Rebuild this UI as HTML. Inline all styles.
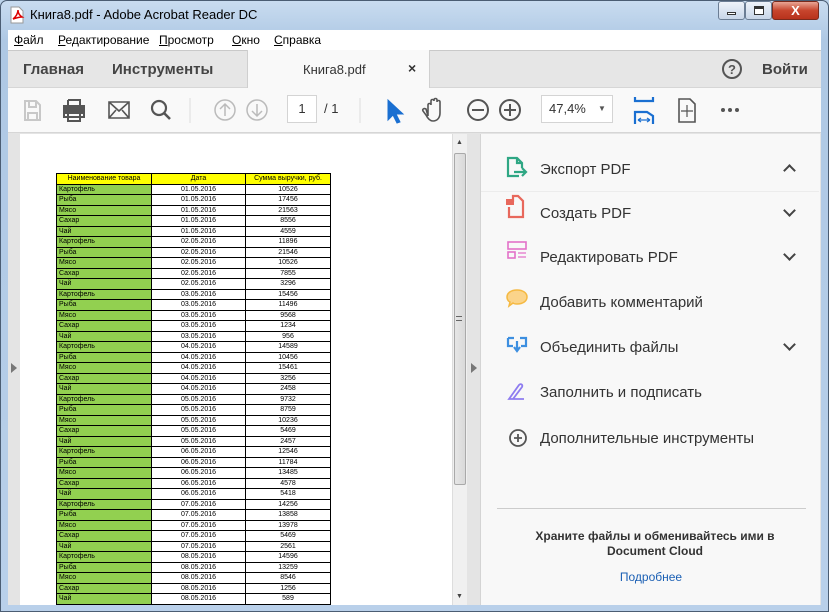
<!DOCTYPE html>
<html><head><meta charset="utf-8"><style>
*{margin:0;padding:0;box-sizing:border-box}
body{width:829px;height:612px;overflow:hidden;background:#bcd3ea;font-family:"Liberation Sans","DejaVu Sans",sans-serif;position:relative}
.abs{position:absolute}
#frame{left:0;top:0;width:829px;height:612px;background:linear-gradient(#c9dcf0,#aec8e4 40px,#b9d0ea);border:1px solid #4b5d73;border-radius:7px 7px 0 0}
#title{left:30px;top:7px;font-size:13px;color:#000}
.wb{top:1px;height:19px;border:1px solid #6b7d94;border-radius:3px;background:linear-gradient(#eef3fa,#c8d6e8)}
#menu{left:8px;top:30px;width:813px;height:20px;background:#fff;font-size:12px;}
#menu span{position:absolute;top:3px;text-decoration:none}
#menu u{text-decoration:underline}
#tabs{left:8px;top:50px;width:813px;height:38px;background:#e6e6e6;border-top:1px solid #c9c9c9;border-bottom:1px solid #d6d6d6}
#tb{left:8px;top:88px;width:813px;height:45px;background:#f9f9f9;border-bottom:1px solid #d6d6d6}
#doc{left:8px;top:133px;width:813px;height:472px;background:#e4e4e4}
#page{left:20px;top:134px;width:432px;height:471px;background:#fff}
#sb{left:452px;top:134px;width:15px;height:471px;background:#f0f0f0;border-left:1px solid #ddd}
#thumb{left:454px;top:153px;width:12px;height:332px;background:linear-gradient(90deg,#e6e6e6,#d9d9d9);border:1px solid #a9a9a9;border-radius:2px}
#rp{left:480px;top:134px;width:340px;height:471px;background:#f8f8f8;border-left:1px solid #d4d4d4}
table{position:absolute;left:56px;top:173px;border-collapse:collapse;font-size:7px;line-height:9.5px}
td{border:1px solid #000;height:10.5px;padding:0 2px;white-space:nowrap}
td:nth-child(1){width:95px;background:#92d050}
td:nth-child(2){width:94px;text-align:center}
td:nth-child(3){width:85px;text-align:center}
tr.h td{background:#ff0;text-align:center}
.item{position:absolute;left:540px;font-size:15px;color:#333}
.chev{position:absolute;left:785px;width:9px;height:9px;border-right:2px solid #444;border-bottom:2px solid #444;transform:rotate(45deg)}
</style></head><body>
<div id="frame" class="abs"></div>
<svg class="abs" style="left:9px;top:6px" width="16" height="18"><path d="M2 1h8l4 4v12H2z" fill="#fff" stroke="#999"/><path d="M4 13c3-2 5-6 5-9 0 3 1 5 4 7-3 0-6 1-9 2z" fill="none" stroke="#d00" stroke-width="1.5"/></svg>
<div id="title" class="abs">Книга8.pdf - Adobe Acrobat Reader DC</div>
<div class="abs wb" style="left:718px;width:27px"><div class="abs" style="left:8px;top:10px;width:9px;height:3px;background:#fff;border:1px solid #333"></div></div>
<div class="abs wb" style="left:745px;width:27px"><div class="abs" style="left:8px;top:4px;width:10px;height:9px;border:1px solid #333;border-top-width:3px;background:#fff"></div></div>
<div class="abs wb" style="left:772px;width:47px;background:linear-gradient(#e9a595,#c7452d 50%,#b8321c);border-color:#7a2a1c;color:#fff;font-weight:bold;text-align:center;font-size:13px;line-height:17px">X</div>
<div id="menu" class="abs">
<span style="left:6px"><u>Ф</u>айл</span><span style="left:50px"><u>Р</u>едактирование</span><span style="left:151px"><u>П</u>росмотр</span><span style="left:224px"><u>О</u>кно</span><span style="left:266px"><u>С</u>правка</span>
</div>
<div id="tabs" class="abs">
<div class="abs" style="left:15px;top:10px;font-size:15px;font-weight:bold;color:#444">Главная</div>
<div class="abs" style="left:104px;top:10px;font-size:15px;font-weight:bold;color:#444">Инструменты</div>
<div class="abs" style="left:239px;top:-1px;width:183px;height:38px;background:#f9f9f9;border-left:1px solid #cfcfcf;border-right:1px solid #cfcfcf"></div>
<div class="abs" style="left:295px;top:11px;font-size:13px;color:#333">Книга8.pdf</div>
<div class="abs" style="left:400px;top:9px;font-size:14px;color:#333;font-weight:bold">×</div>
<div class="abs" style="left:714px;top:8px;width:20px;height:20px;border:2px solid #555;border-radius:50%;font-size:13px;font-weight:bold;color:#555;text-align:center;line-height:17px">?</div>
<div class="abs" style="left:754px;top:10px;font-size:15px;font-weight:bold;color:#444">Войти</div>
</div>
<div id="tb" class="abs"></div>
<svg class="abs" style="left:0;top:88px" width="829" height="45" fill="none" stroke-width="2">
<path d="M25 13h11l4 4v15H25z M29 13v6h7v-6 M28 32v-7h9v7" stroke="#c8c8c8"/>
<path d="M68 12h12v6 M68 18v-6 M64 18h20v11H64z M68 25h12v8H68z" stroke="#555" fill="none"/><rect x="64" y="18" width="20" height="8" fill="#555"/>
<path d="M109 14h20v16h-20z M109 14l10 9 10-9 M109 30l7-8 M129 30l-7-8" stroke="#555" stroke-width="1.6"/>
<circle cx="159" cy="20" r="7" stroke="#555" stroke-width="2.2"/><path d="M164 25l6 6" stroke="#555" stroke-width="2.6"/>
<path d="M190 10v25" stroke="#ddd" stroke-width="1"/>
<circle cx="225" cy="22" r="10" stroke="#bbb" stroke-width="1.5"/><path d="M225 28v-12 M220 21l5-5 5 5" stroke="#bbb" stroke-width="1.5"/>
<circle cx="257" cy="22" r="10" stroke="#bbb" stroke-width="1.5"/><path d="M257 16v12 M252 23l5 5 5-5" stroke="#bbb" stroke-width="1.5"/>
<path d="M360 10v25" stroke="#ddd" stroke-width="1"/>
<path d="M388 12v20l5-5 4 8 3-1-4-8h7z" fill="#1a6fd1" stroke="#1a6fd1" stroke-width="1"/>
<path d="M428 28v-11c0-2 3-2 3 0v-4c0-2 3-2 3 0v-1c0-2 3-2 3 0v2c0-2 3-2 3 0v11c0 5-3 8-7 8-3 0-5-2-7-6l-3-4c-1-2 1-3 3-2z" stroke="#555" stroke-width="1.6"/>
<circle cx="478" cy="22" r="10" stroke="#555"/><path d="M472 22h12" stroke="#555"/>
<circle cx="510" cy="22" r="10" stroke="#555"/><path d="M504 22h12 M510 16v12" stroke="#555"/>
<path d="M635 9v4h18v-4 M635 36v-12h12l6 4v8" stroke="#1a6fd1" stroke-width="2.2"/><path d="M638 32h12 M638 32l3-2 M638 32l3 2 M650 32l-3-2 M650 32l-3 2" stroke="#1a6fd1" stroke-width="1.3"/>
<path d="M679 11h11l5 5v18h-16z" stroke="#555" stroke-width="1.6"/><path d="M687 17v12 M681 23h12" stroke="#555" stroke-width="1.2"/>
<circle cx="723" cy="22" r="2" fill="#555" stroke="none"/><circle cx="730" cy="22" r="2" fill="#555" stroke="none"/><circle cx="737" cy="22" r="2" fill="#555" stroke="none"/>
</svg>
<div class="abs" style="left:287px;top:95px;width:30px;height:28px;background:#fff;border:1px solid #d4d4d4;font-size:13px;color:#333;text-align:center;line-height:26px">1</div>
<div class="abs" style="left:324px;top:101px;font-size:13px;color:#333">/ 1</div>
<div class="abs" style="left:541px;top:95px;width:72px;height:28px;background:#fff;border:1px solid #d4d4d4;font-size:13px;color:#333;padding-left:7px;line-height:26px">47,4%<span style="position:absolute;left:56px;top:0;font-size:8px;color:#555">▼</span></div>
<div id="doc" class="abs"></div>
<div class="abs" style="left:11px;top:363px;width:0;height:0;border-left:6px solid #777;border-top:5px solid transparent;border-bottom:5px solid transparent"></div>
<div id="page" class="abs"></div>
<div id="sb" class="abs"></div>
<div class="abs" style="left:456px;top:139px;font-size:7px;color:#444">▲</div>
<div class="abs" style="left:456px;top:593px;font-size:7px;color:#444">▼</div>
<div id="thumb" class="abs"></div>
<div class="abs" style="left:456px;top:316px;width:6px;height:5px;border-top:1px solid #666;border-bottom:1px solid #666"></div>
<div class="abs" style="left:471px;top:363px;width:0;height:0;border-left:6px solid #777;border-top:5px solid transparent;border-bottom:5px solid transparent"></div>
<table>
<tr class="h"><td>Наименование товара</td><td>Дата</td><td>Сумма выручки, руб.</td></tr>
<tr><td>Картофель</td><td>01.05.2016</td><td>10526</td></tr>
<tr><td>Рыба</td><td>01.05.2016</td><td>17456</td></tr>
<tr><td>Мясо</td><td>01.05.2016</td><td>21563</td></tr>
<tr><td>Сахар</td><td>01.05.2016</td><td>8556</td></tr>
<tr><td>Чай</td><td>01.05.2016</td><td>4559</td></tr>
<tr><td>Картофель</td><td>02.05.2016</td><td>11896</td></tr>
<tr><td>Рыба</td><td>02.05.2016</td><td>21546</td></tr>
<tr><td>Мясо</td><td>02.05.2016</td><td>10526</td></tr>
<tr><td>Сахар</td><td>02.05.2016</td><td>7855</td></tr>
<tr><td>Чай</td><td>02.05.2016</td><td>3296</td></tr>
<tr><td>Картофель</td><td>03.05.2016</td><td>15456</td></tr>
<tr><td>Рыба</td><td>03.05.2016</td><td>11496</td></tr>
<tr><td>Мясо</td><td>03.05.2016</td><td>9568</td></tr>
<tr><td>Сахар</td><td>03.05.2016</td><td>1234</td></tr>
<tr><td>Чай</td><td>03.05.2016</td><td>956</td></tr>
<tr><td>Картофель</td><td>04.05.2016</td><td>14589</td></tr>
<tr><td>Рыба</td><td>04.05.2016</td><td>10456</td></tr>
<tr><td>Мясо</td><td>04.05.2016</td><td>15461</td></tr>
<tr><td>Сахар</td><td>04.05.2016</td><td>3256</td></tr>
<tr><td>Чай</td><td>04.05.2016</td><td>2458</td></tr>
<tr><td>Картофель</td><td>05.05.2016</td><td>9732</td></tr>
<tr><td>Рыба</td><td>05.05.2016</td><td>8759</td></tr>
<tr><td>Мясо</td><td>05.05.2016</td><td>10236</td></tr>
<tr><td>Сахар</td><td>05.05.2016</td><td>5469</td></tr>
<tr><td>Чай</td><td>05.05.2016</td><td>2457</td></tr>
<tr><td>Картофель</td><td>06.05.2016</td><td>12546</td></tr>
<tr><td>Рыба</td><td>06.05.2016</td><td>11784</td></tr>
<tr><td>Мясо</td><td>06.05.2016</td><td>13485</td></tr>
<tr><td>Сахар</td><td>06.05.2016</td><td>4578</td></tr>
<tr><td>Чай</td><td>06.05.2016</td><td>5418</td></tr>
<tr><td>Картофель</td><td>07.05.2016</td><td>14256</td></tr>
<tr><td>Рыба</td><td>07.05.2016</td><td>13858</td></tr>
<tr><td>Мясо</td><td>07.05.2016</td><td>13978</td></tr>
<tr><td>Сахар</td><td>07.05.2016</td><td>5469</td></tr>
<tr><td>Чай</td><td>07.05.2016</td><td>2561</td></tr>
<tr><td>Картофель</td><td>08.05.2016</td><td>14596</td></tr>
<tr><td>Рыба</td><td>08.05.2016</td><td>13259</td></tr>
<tr><td>Мясо</td><td>08.05.2016</td><td>8546</td></tr>
<tr><td>Сахар</td><td>08.05.2016</td><td>1256</td></tr>
<tr><td>Чай</td><td>08.05.2016</td><td>589</td></tr>
</table>
<div id="rp" class="abs"></div>
<div class="abs" style="left:481px;top:191px;width:338px;height:1px;background:#ececec"></div>
<svg class="abs" style="left:505px;top:155px" width="30" height="300" fill="none" stroke-width="2.2">
<path d="M14 21H3V3h9l5 5v5 M12 3v5h5" stroke="#2fa784"/><path d="M9 17h12 M17 13l4 4-4 4" stroke="#2fa784"/>
<path d="M4 52v10h14V46l-5-5H8v6" stroke="#e8685c"/><rect x="1" y="44" width="8" height="6" fill="#e8685c"/>
<rect x="3" y="87" width="18" height="7" stroke="#e371c9" stroke-width="1.6"/><rect x="3" y="97" width="7" height="6" stroke="#e371c9" stroke-width="1.6"/><path d="M13 98h8 M13 102h8" stroke="#e371c9" stroke-width="1.3"/>
<path d="M12 135c6 0 10 3 10 7s-4 7-10 7c-2 0-3 0-4-1l-4 3 1-4c-2-1-3-3-3-5 0-4 4-7 10-7z" fill="#fbd48a" stroke="#f5b942" stroke-width="1.5"/>
<path d="M3 183h6 M3 183v8h5 M15 183h6v8h-5 M12 186v9 M9 192l3 4 3-4" stroke="#3d8fe0"/>
<path d="M4 244l10-14c2-2 4 0 3 2l-9 12z M4 244h15" stroke="#8e7cf0" stroke-width="1.8"/>
<circle cx="13" cy="283" r="8" stroke="#555" stroke-width="1.8"/><path d="M9 283h8 M13 279v8" stroke="#555" stroke-width="1.8"/>
</svg>
<div class="item" style="top:161px">Экспорт PDF</div>
<div class="chev" style="top:166px;transform:rotate(-135deg)"></div>
<div class="item" style="top:205px">Создать PDF</div>
<div class="chev" style="top:206px"></div>
<div class="item" style="top:249px">Редактировать PDF</div>
<div class="chev" style="top:250px"></div>
<div class="item" style="top:294px">Добавить комментарий</div>
<div class="item" style="top:339px">Объединить файлы</div>
<div class="chev" style="top:340px"></div>
<div class="item" style="top:384px">Заполнить и подписать</div>
<div class="item" style="top:430px">Дополнительные инструменты</div>
<div class="abs" style="left:497px;top:508px;width:309px;height:1px;background:#ccc"></div>
<div class="abs" style="left:490px;top:529px;width:330px;text-align:center;font-size:12px;font-weight:bold;color:#333;line-height:15px">Храните файлы и обменивайтесь ими в<br>Document Cloud</div>
<div class="abs" style="left:490px;top:570px;width:322px;text-align:center;font-size:12px;color:#1a5fb4">Подробнее</div>
</body></html>
